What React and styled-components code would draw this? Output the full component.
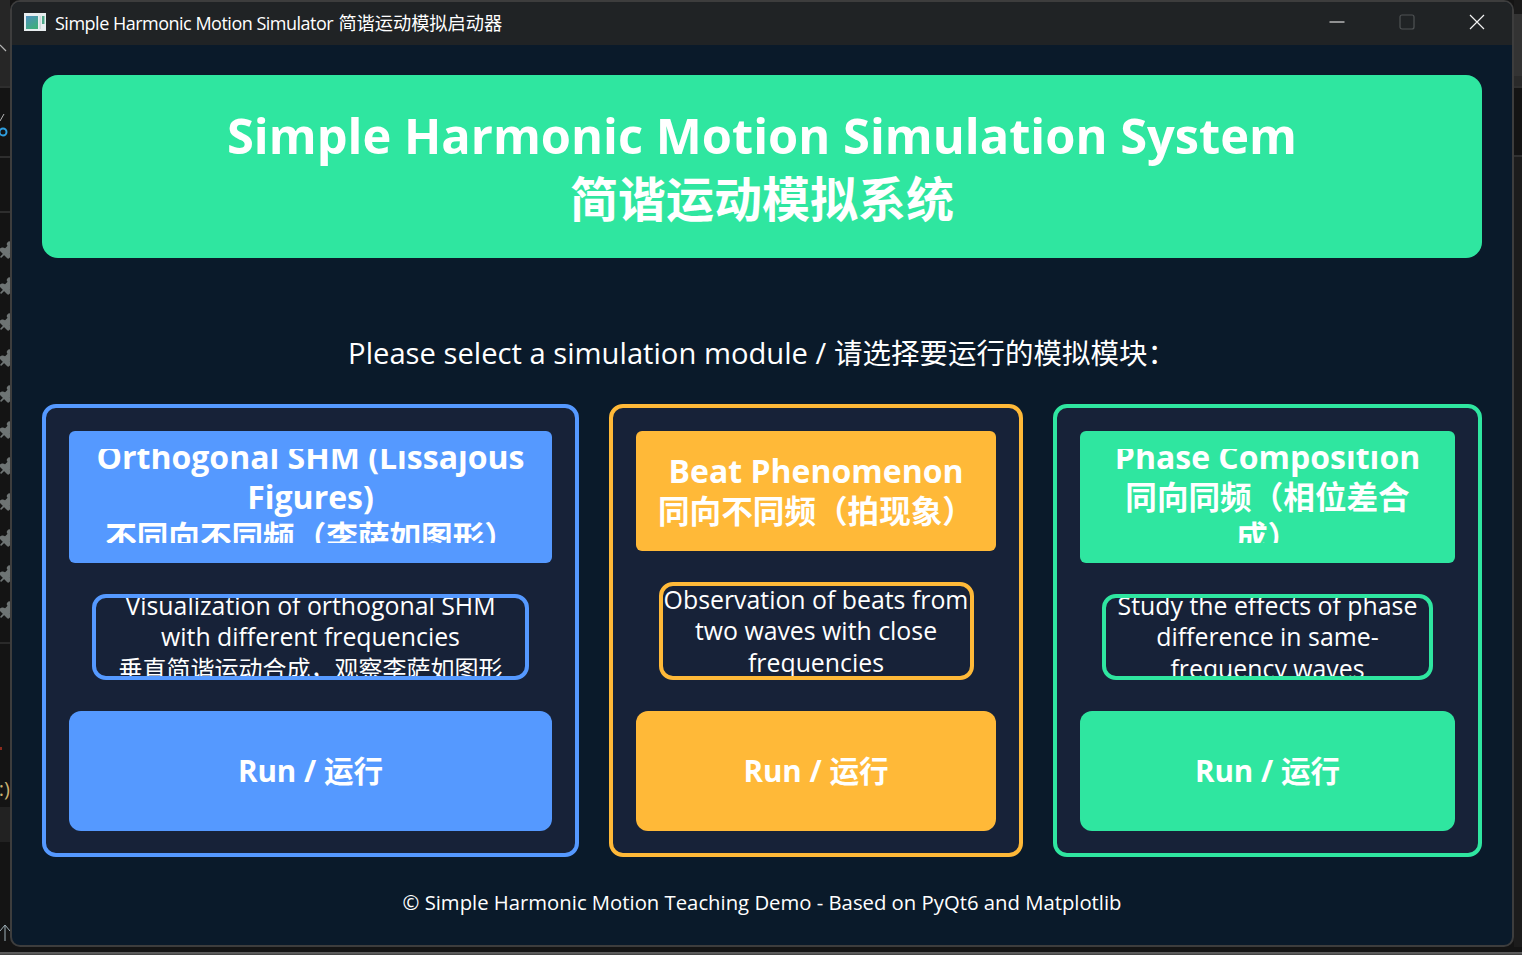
import React from "react";
import styled, { createGlobalStyle } from "styled-components";
import { Pin } from "lucide-react";

const BLUE = "#5599ff";
const ORANGE = "#ffb938";
const GREEN = "#2fe6a0";
const FONT = `"Open Sans", "Noto Sans CJK SC", sans-serif`;

const Global = createGlobalStyle`
  html, body { margin: 0; padding: 0; height: 955px; overflow: hidden; background: #141414; }
  #root { height: 955px; }
  * { box-sizing: border-box; }
`;

const Desktop = styled.div`
  display: flex;
  flex-direction: column;
  width: 1522px;
  height: 955px;
  font-family: ${FONT};
  color: #fff;
`;
const Row = styled.div`
  display: flex;
  height: 947px;
`;
const BottomEdge = styled.div`
  height: 8px;
  background: linear-gradient(#141414 0 62%, #6a6a6a 70%, #3a3a3a 100%);
`;

const LeftRail = styled.div`
  width: 10px;
  height: 100%;
  display: flex;
  flex-direction: column;
  overflow: hidden;
  background: #141414;
`;
const RailTop = styled.div`
  height: 88px;
  padding-top: 43px;
  background: #262626;
  border-bottom: 2px solid #2e2e2e;
  display: flex;
  align-items: flex-start;
`;
const RailTicks = styled.div`
  height: 70px;
  padding-top: 22px;
  border-bottom: 2px solid #2e2e2e;
  display: flex;
  flex-direction: column;
`;
const RailBlank = styled.div`
  height: 55px;
  border-bottom: 2px solid #2e2e2e;
`;
const PinList = styled.div`
  height: 432px;
  padding-top: 28px;
  display: flex;
  flex-direction: column;
  gap: 16px;
  border-bottom: 2px solid #2a2a2a;
  color: #6e7474;
`;
const PinIcon = styled(Pin)`
  flex: none;
  transform: translateX(-3px) rotate(45deg);
  fill: currentColor;
`;
const RailLog = styled.div`
  height: 163px;
  padding-top: 103px;
  display: flex;
  flex-direction: column;
`;
const RedMark = styled.div`
  width: 2px;
  height: 3px;
  background: #8c2a1c;
`;
const Smile = styled.div`
  margin-top: 26px;
  font-size: 20px;
  line-height: 26px;
  color: #c9b070;
  white-space: nowrap;
  display: flex;
  justify-content: flex-end;
`;
const RailBand = styled.div`
  height: 35px;
  background: #222;
`;
const RailFoot = styled.div`
  flex: 1;
  padding-top: 82px;
`;

const RightRail = styled.div`
  width: 8px;
  height: 100%;
  display: flex;
  flex-direction: column;
  background: #1c1c1c;
`;
const RightChunk = styled.div`
  height: ${(p) => p.$h}px;
  background: ${(p) => p.$bg};
  border-bottom: ${(p) => (p.$line ? "2px solid #303030" : "none")};
`;

const Window = styled.div`
  width: 1504px;
  height: 947px;
  border: 2px solid #3d3d3d;
  border-radius: 10px;
  background: #0a1a2a;
  overflow: hidden;
  display: flex;
  flex-direction: column;
`;
const TitleBar = styled.div`
  height: 43px;
  flex: none;
  background: #202325;
  display: flex;
  align-items: center;
  padding: 0 0 3px 12px;
`;
const TitleText = styled.div`
  margin-left: 9px;
  font-size: 18px;
  letter-spacing: -0.5px;
  white-space: nowrap;
  flex: 1;
`;
const TitleCjk = styled.span`
  margin-left: 1px;
  font-size: 18.2px;
  letter-spacing: 0;
`;
const WinButtons = styled.div`
  display: flex;
  align-items: center;
  gap: 54px;
  padding-right: 27px;
`;

const Main = styled.div`
  flex: 1;
  display: flex;
  flex-direction: column;
  padding: 30px 30px 0;
`;
const Header = styled.div`
  height: 183px;
  flex: none;
  background: ${GREEN};
  border-radius: 16px;
  display: flex;
  align-items: center;
  justify-content: center;
  text-align: center;
  font-weight: 700;
  padding-top: 1px;
`;
const HeaderLine = styled.div`
  font-size: ${(p) => p.$size}px;
  line-height: 63px;
  white-space: nowrap;
`;
const Prompt = styled.div`
  margin-top: 74px;
  height: 42px;
  line-height: 42px;
  font-size: 29.2px;
  text-align: center;
  white-space: nowrap;
`;
const PromptCjk = styled.span`
  font-size: 28.5px;
`;
const Cards = styled.div`
  margin-top: 30px;
  display: flex;
  gap: 30px;
`;
const Card = styled.div`
  width: ${(p) => p.$w}px;
  height: 453px;
  border: 4px solid ${(p) => p.$c};
  border-radius: 14px;
  background: #172238;
  padding: 23px 23px 22px;
  display: flex;
  flex-direction: column;
  align-items: center;
`;
const TitleBox = styled.div`
  width: 100%;
  height: ${(p) => p.$h}px;
  flex: none;
  background: ${(p) => p.$c};
  border-radius: 6px;
  padding: 18px 0 20px;
  display: flex;
`;
const TitleClip = styled.div`
  flex: 1;
  min-width: 0;
  overflow: hidden;
  display: flex;
  align-items: center;
  justify-content: center;
`;
const TitleLines = styled.div`
  flex: none;
  text-align: center;
  font-weight: 700;
  line-height: 40px;
  white-space: nowrap;
  transform: translateY(1px);
`;
const TitleLine = styled.div`
  font-size: ${(p) => (p.$cjk ? 31.6 : 32)}px;
`;
const Desc = styled.div`
  width: ${(p) => p.$w}px;
  height: ${(p) => p.$h}px;
  margin-top: 31px;
  flex: none;
  border: 4px solid ${(p) => p.$c};
  border-radius: 14px;
  background: #172238;
  overflow: hidden;
  display: flex;
  align-items: center;
  justify-content: center;
`;
const DescLines = styled.div`
  flex: none;
  text-align: center;
  line-height: 31.5px;
  white-space: nowrap;
`;
const DescLine = styled.div`
  font-size: ${(p) => (p.$cjk ? 24 : 24.85)}px;
`;
const RunButton = styled.button`
  width: 100%;
  height: 120px;
  flex: none;
  margin-top: 31px;
  border: 0;
  border-radius: 12px;
  padding: 0 0 4px;
  background: ${(p) => p.$c};
  color: #fff;
  font-family: ${FONT};
  font-size: 29.6px;
  font-weight: 700;
`;
const Footer = styled.div`
  margin-top: 30px;
  height: 30px;
  line-height: 30px;
  font-size: 20.3px;
  text-align: center;
  white-space: nowrap;
`;

const cards = [
  {
    w: 537, c: BLUE, th: 132, dw: 437, dh: 86,
    title: ["Orthogonal SHM (Lissajous", "Figures)", "不同向不同频（李萨如图形）"],
    desc: ["Visualization of orthogonal SHM", "with different frequencies", "垂直简谐运动合成，观察李萨如图形"],
  },
  {
    w: 414, c: ORANGE, th: 120, dw: 315, dh: 98,
    title: ["Beat Phenomenon", "同向不同频（拍现象）"],
    desc: ["Observation of beats from", "two waves with close", "frequencies"],
  },
  {
    w: 429, c: GREEN, th: 132, dw: 331, dh: 86,
    title: ["Phase Composition", "同向同频（相位差合", "成）"],
    desc: ["Study the effects of phase", "difference in same-", "frequency waves"],
  },
];

const isCjk = (t) => /[\u4e00-\u9fff]/.test(t);

const AppIcon = () => (
  <svg width="22" height="18" viewBox="0 0 22 18">
    <defs>
      <linearGradient id="appg" x1="0" y1="0" x2="0.6" y2="1">
        <stop offset="0" stopColor="#4f8fc0" />
        <stop offset="1" stopColor="#3fae7c" />
      </linearGradient>
    </defs>
    <rect x="0" y="0" width="22" height="18" fill="#e8eef0" />
    <rect x="2" y="3" width="12" height="13" fill="url(#appg)" />
    <rect x="15.5" y="3" width="1.5" height="13" fill="#cfd8da" />
    <rect x="18" y="3" width="2.5" height="8" fill="#4fa88a" />
  </svg>
);

const Minimize = () => (
  <svg width="16" height="16" viewBox="0 0 16 16">
    <path d="M0.5 8h15" stroke="#fff" strokeWidth="1" fill="none" />
  </svg>
);
const Maximize = () => (
  <svg width="16" height="16" viewBox="0 0 16 16">
    <rect x="1" y="1" width="14" height="14" rx="2" stroke="#4f5254" strokeWidth="1.2" fill="none" />
  </svg>
);
const CloseIcon = () => (
  <svg width="16" height="16" viewBox="0 0 16 16">
    <path d="M1 1l14 14M15 1L1 15" stroke="#f2f2f2" strokeWidth="1.2" fill="none" />
  </svg>
);

const Chevron = () => (
  <svg width="10" height="10" viewBox="0 0 10 10">
    <path d="M0 2l6 6" stroke="#b5b5b5" strokeWidth="1.2" fill="none" />
  </svg>
);
const CheckO = () => (
  <svg width="10" height="30" viewBox="0 0 10 30">
    <path d="M0 11l4-7" stroke="#b5b5b5" strokeWidth="1" fill="none" />
    <circle cx="3" cy="22" r="3.5" stroke="#2f9fe0" strokeWidth="2" fill="none" />
  </svg>
);
const UpArrow = () => (
  <svg width="10" height="18" viewBox="0 0 10 18">
    <path d="M5 17V2M0 7l5-6 5 6" stroke="#9fb0b8" strokeWidth="1" fill="none" />
  </svg>
);

export default function App() {
  return (
    <Desktop>
      <Global />
      <Row>
        <LeftRail>
          <RailTop><Chevron /></RailTop>
          <RailTicks><CheckO /></RailTicks>
          <RailBlank />
          <PinList>
            {Array.from({ length: 11 }, (_, i) => (
              <PinIcon key={i} size={20} strokeWidth={2} />
            ))}
          </PinList>
          <RailLog>
            <RedMark />
            <Smile>:)</Smile>
          </RailLog>
          <RailBand />
          <RailFoot><UpArrow /></RailFoot>
        </LeftRail>
        <Window>
          <TitleBar>
            <AppIcon />
            <TitleText>
              Simple Harmonic Motion Simulator <TitleCjk>简谐运动模拟启动器</TitleCjk>
            </TitleText>
            <WinButtons>
              <Minimize />
              <Maximize />
              <CloseIcon />
            </WinButtons>
          </TitleBar>
          <Main>
            <Header>
              <div>
                <HeaderLine $size={48.8}>Simple Harmonic Motion Simulation System</HeaderLine>
                <HeaderLine $size={48}>简谐运动模拟系统</HeaderLine>
              </div>
            </Header>
            <Prompt>
              Please select a simulation module / <PromptCjk>请选择要运行的模拟模块：</PromptCjk>
            </Prompt>
            <Cards>
              {cards.map((k) => (
                <Card key={k.c} $w={k.w} $c={k.c}>
                  <TitleBox $h={k.th} $c={k.c}>
                    <TitleClip>
                      <TitleLines>
                        {k.title.map((t) => (
                          <TitleLine key={t} $cjk={isCjk(t)}>{t}</TitleLine>
                        ))}
                      </TitleLines>
                    </TitleClip>
                  </TitleBox>
                  <Desc $w={k.dw} $h={k.dh} $c={k.c}>
                    <DescLines>
                      {k.desc.map((t) => (
                        <DescLine key={t} $cjk={isCjk(t)}>{t}</DescLine>
                      ))}
                    </DescLines>
                  </Desc>
                  <RunButton $c={k.c}>Run / 运行</RunButton>
                </Card>
              ))}
            </Cards>
            <Footer>© Simple Harmonic Motion Teaching Demo - Based on PyQt6 and Matplotlib</Footer>
          </Main>
        </Window>
        <RightRail>
          <RightChunk $h={14} $bg="#1a1a1a" />
          <RightChunk $h={62} $bg="#333333" />
          <RightChunk $h={12} $bg="#2a2a2a" $line />
          <RightChunk $h={69} $bg="#141414" $line />
        </RightRail>
      </Row>
      <BottomEdge />
    </Desktop>
  );
}
